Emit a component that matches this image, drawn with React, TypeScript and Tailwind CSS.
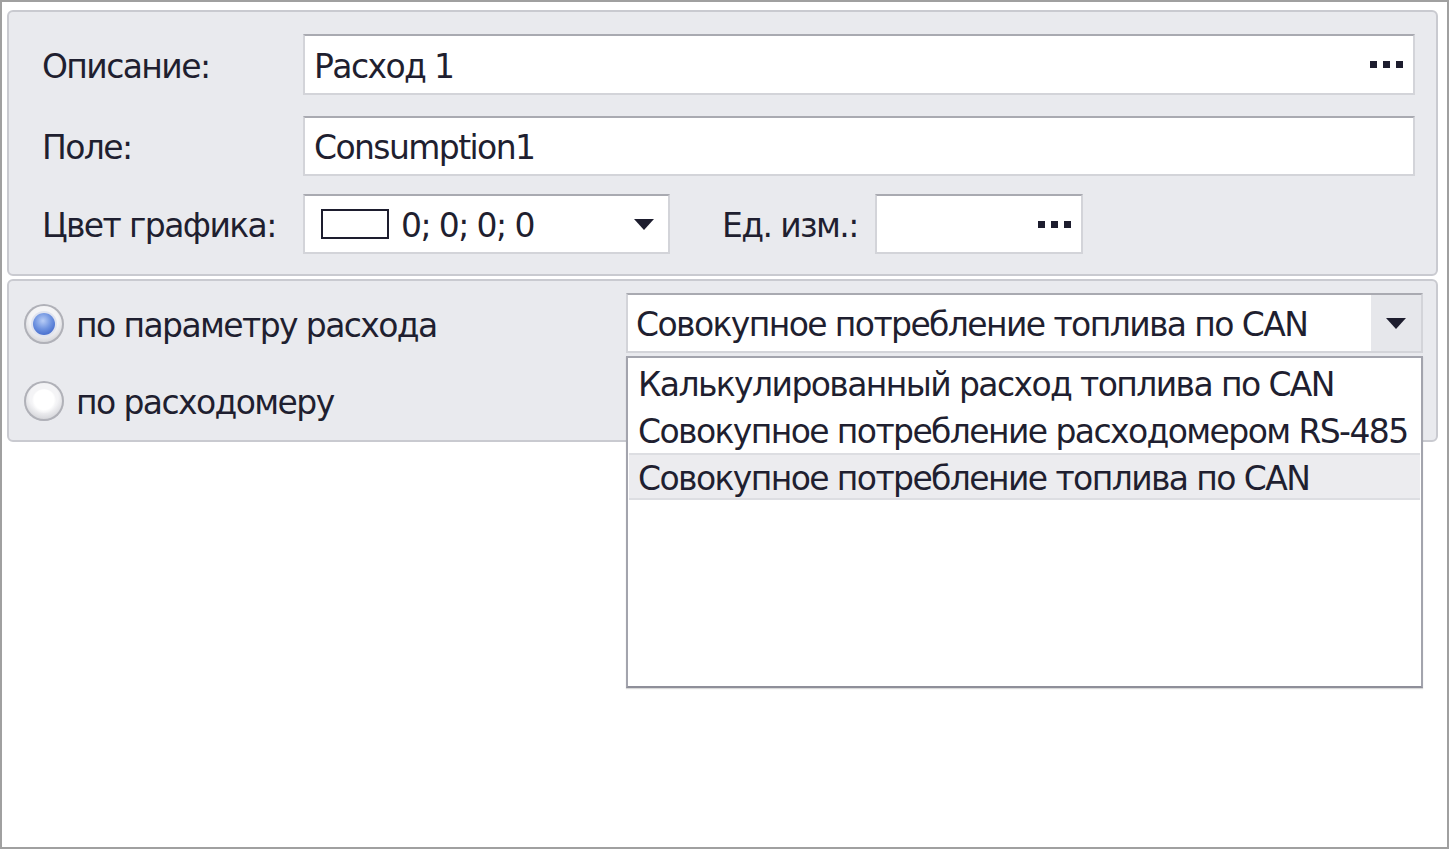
import React from 'react';

const font = "font-['DejaVu_Sans','Liberation_Sans',sans-serif]";

function Ellipsis() {
  return (
    <div className="flex items-center gap-[6px]">
      <span className="block h-[7px] w-[7px] bg-[#1d1d2e]" />
      <span className="block h-[7px] w-[7px] bg-[#1d1d2e]" />
      <span className="block h-[7px] w-[7px] bg-[#1d1d2e]" />
    </div>
  );
}

function Arrow() {
  return (
    <svg width="20" height="11" viewBox="0 0 20 11">
      <polygon points="0,0 20,0 10,11" fill="#1d1d2e" />
    </svg>
  );
}

function Radio({ checked }: { checked: boolean }) {
  return (
    <div className="flex h-[40px] w-[40px] items-center justify-center rounded-full bg-[radial-gradient(circle_at_50%_40%,#f4f4f6_45%,#b4b5bc_100%)] shadow-[inset_0_0_0_2px_#b0b1b8]">
      {checked ? (
        <div className="h-[22px] w-[22px] rounded-full bg-[radial-gradient(circle_at_45%_35%,#b8cdf6_0%,#6f93e0_45%,#2f56c2_100%)] shadow-[0_0_0_2px_#dfe3ef]" />
      ) : (
        <div className="h-[24px] w-[24px] rounded-full bg-[radial-gradient(circle_at_50%_45%,#ffffff_55%,#dcdde2_100%)]" />
      )}
    </div>
  );
}

const inputBox =
  'flex items-center border-2 border-[#d3d4d9] border-t-[#a9aab1] bg-white';

export default function App() {
  const items = [
    'Калькулированный расход топлива по CAN',
    'Совокупное потребление расходомером RS-485',
    'Совокупное потребление топлива по CAN',
  ];

  return (
    <div
      className={`${font} h-[849px] w-[1449px] whitespace-nowrap border-2 border-[#a0a0a0] bg-white pl-[5px] pr-[9px] pt-[8px] text-[33px] tracking-[-1.6px] text-[#1f1f30]`}
    >
      {/* top panel */}
      <div className="h-[266px] rounded-[6px] border-2 border-[#c9cad0] bg-[#e9eaee] pl-[33px] pr-[21px] pt-[22px]">
        <div className="flex items-center">
          <div className="w-[261px] pt-[4px]">Описание:</div>
          <div className={`${inputBox} h-[61px] flex-1 justify-between pl-[9px] pr-[10px]`}>
            <span className="pt-[4px]">Расход 1</span>
            <Ellipsis />
          </div>
        </div>
        <div className="mt-[21px] flex items-center">
          <div className="w-[261px] pt-[4px]">Поле:</div>
          <div className={`${inputBox} h-[60px] flex-1 pl-[9px]`}>
            <span className="pt-[4px]">Consumption1</span>
          </div>
        </div>
        <div className="mt-[18px] flex items-center">
          <div className="w-[261px] pt-[4px]">Цвет графика:</div>
          <div className={`${inputBox} h-[60px] w-[367px] justify-between pl-[16px] pr-[14px]`}>
            <div className="flex items-center gap-[12px]">
              <span className="block h-[30px] w-[68px] border-2 border-[#1d1d2e] bg-white" />
              <span className="pt-[4px]">0; 0; 0; 0</span>
            </div>
            <Arrow />
          </div>
          <div className="ml-[52px] w-[153px] pt-[4px]">Ед. изм.:</div>
          <div className={`${inputBox} h-[60px] w-[208px] justify-end pr-[10px]`}>
            <Ellipsis />
          </div>
        </div>
      </div>

      {/* bottom panel */}
      <div className="mt-[3px] flex h-[163px] rounded-[6px] border-2 border-[#c9cad0] bg-[#e9eaee] pl-[15px] pr-[13px] pt-[12px]">
        <div className="flex-1">
          <div className="mt-[8px] flex h-[46px] items-center gap-[12px]">
            <Radio checked />
            <span className="pt-[4px]">по параметру расхода</span>
          </div>
          <div className="mt-[31px] flex h-[46px] items-center gap-[12px]">
            <Radio checked={false} />
            <span className="pt-[4px]">по расходомеру</span>
          </div>
        </div>

        <div className="relative h-[60px] w-[797px]">
          <div className="flex h-full border-2 border-[#d3d4d9] border-t-[#a9aab1] bg-white">
            <div className="flex flex-1 items-center pl-[8px] pt-[4px]">
              Совокупное потребление топлива по CAN
            </div>
            <div className="flex w-[50px] items-center justify-center bg-[#e6e7eb]">
              <Arrow />
            </div>
          </div>

          {/* popup list */}
          <div className="absolute left-0 top-[63px] z-10 h-[332px] w-[797px] border-2 border-[#a3a4ad] border-b-[#8e8f99] bg-white p-[1px] shadow-[0_1px_1px_rgba(0,0,0,0.15)]">
            {items.map((it, i) => (
              <div
                key={i}
                className={`flex h-[47px] items-center pl-[9px] pt-[4px] ${
                  i === 2 ? 'border-y-2 border-[#dddee2] bg-[#ececef]' : ''
                }`}
              >
                {it}
              </div>
            ))}
          </div>
        </div>
      </div>
    </div>
  );
}
